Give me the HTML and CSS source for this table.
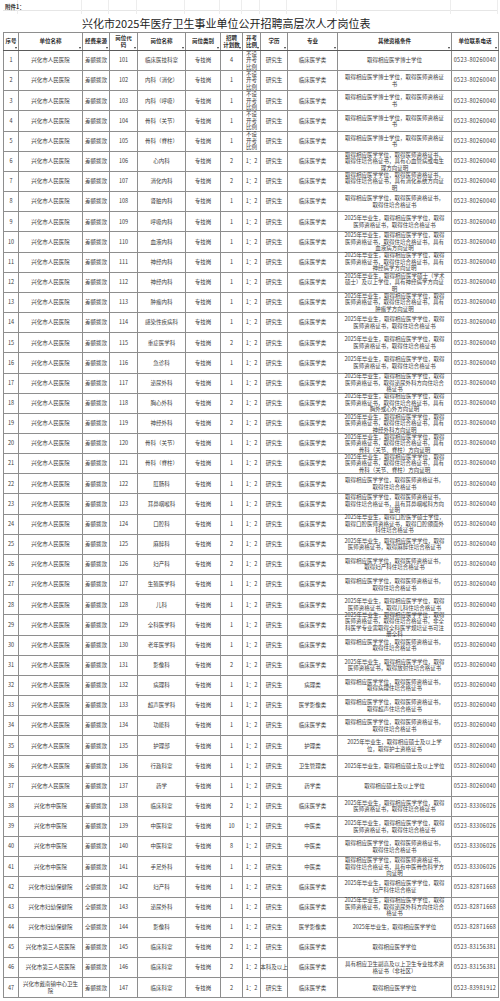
FILE: index.html
```html
<!DOCTYPE html>
<html lang="zh-CN">
<head>
<meta charset="utf-8">
<title>兴化市2025年医疗卫生事业单位公开招聘高层次人才岗位表</title>
<link rel="stylesheet" href="styles.css">
</head>
<body>
<div class="page">
  <div class="sheetrow">
    <span class="attach">附件1：</span><span></span><span></span><span></span><span></span><span></span><span></span><span></span><span></span><span></span><span></span><span></span>
  </div>
  <div class="title">兴化市2025年医疗卫生事业单位公开招聘高层次人才岗位表</div>
  <table class="grid">
    <colgroup>
      <col class="w1"><col class="w2"><col class="w3"><col class="w4"><col class="w5"><col class="w6"><col class="w7"><col class="w8"><col class="w9"><col class="w10"><col class="w11"><col class="w12">
    </colgroup>
    <thead>
      <tr>
        <th><div class="h">序号</div><i class="f"></i></th>
        <th><div class="h">单位名称</div><i class="f"></i></th>
        <th><div class="h">经费来源</div><i class="f"></i></th>
        <th><div class="h">岗位代<br>码</div><i class="f"></i></th>
        <th><div class="h">岗位名称</div><i class="f"></i></th>
        <th><div class="h">岗位类别</div><i class="f"></i></th>
        <th><div class="h">招聘<br>计划数</div><i class="f"></i></th>
        <th><div class="h">开考<br>比例</div><i class="f"></i></th>
        <th><div class="h">学历</div><i class="f"></i></th>
        <th><div class="h">专业</div><i class="f"></i></th>
        <th><div class="h">其他资格条件</div><i class="f"></i></th>
        <th><div class="h">单位联系电话</div><i class="f"></i></th>
      </tr>
    </thead>
    <tbody>
      <tr><td><div class="c">1</div></td><td class="unit"><div class="c">兴化市人民医院</div></td><td><div class="c">差额拨款</div></td><td><div class="c">101</div></td><td><div class="c">临床医技科室</div></td><td><div class="c">专技岗</div></td><td><div class="c">4</div></td><td><div class="c">不设开考比例</div></td><td><div class="c">研究生</div></td><td><div class="c">临床医学类</div></td><td class="cond"><div class="c">取得相应医学博士学位</div></td><td><div class="c tel">0523-80260040</div></td></tr>
      <tr><td><div class="c">2</div></td><td class="unit"><div class="c">兴化市人民医院</div></td><td><div class="c">差额拨款</div></td><td><div class="c">102</div></td><td><div class="c">内科（消化）</div></td><td><div class="c">专技岗</div></td><td><div class="c">1</div></td><td><div class="c">不设开考比例</div></td><td><div class="c">研究生</div></td><td><div class="c">临床医学类</div></td><td class="cond"><div class="c">取得相应医学博士学位，取得医师资格证书</div></td><td><div class="c tel">0523-80260040</div></td></tr>
      <tr><td><div class="c">3</div></td><td class="unit"><div class="c">兴化市人民医院</div></td><td><div class="c">差额拨款</div></td><td><div class="c">103</div></td><td><div class="c">内科（呼吸）</div></td><td><div class="c">专技岗</div></td><td><div class="c">1</div></td><td><div class="c">不设开考比例</div></td><td><div class="c">研究生</div></td><td><div class="c">临床医学类</div></td><td class="cond"><div class="c">取得相应医学博士学位，取得医师资格证书</div></td><td><div class="c tel">0523-80260040</div></td></tr>
      <tr><td><div class="c">4</div></td><td class="unit"><div class="c">兴化市人民医院</div></td><td><div class="c">差额拨款</div></td><td><div class="c">104</div></td><td><div class="c">骨科（关节）</div></td><td><div class="c">专技岗</div></td><td><div class="c">1</div></td><td><div class="c">不设开考比例</div></td><td><div class="c">研究生</div></td><td><div class="c">临床医学类</div></td><td class="cond"><div class="c">取得相应医学博士学位，取得医师资格证书</div></td><td><div class="c tel">0523-80260040</div></td></tr>
      <tr><td><div class="c">5</div></td><td class="unit"><div class="c">兴化市人民医院</div></td><td><div class="c">差额拨款</div></td><td><div class="c">105</div></td><td><div class="c">骨科（脊柱）</div></td><td><div class="c">专技岗</div></td><td><div class="c">1</div></td><td><div class="c">不设开考比例</div></td><td><div class="c">研究生</div></td><td><div class="c">临床医学类</div></td><td class="cond"><div class="c">取得相应医学博士学位，取得医师资格证书</div></td><td><div class="c tel">0523-80260040</div></td></tr>
      <tr><td><div class="c">6</div></td><td class="unit"><div class="c">兴化市人民医院</div></td><td><div class="c">差额拨款</div></td><td><div class="c">106</div></td><td><div class="c">心内科</div></td><td><div class="c">专技岗</div></td><td><div class="c">2</div></td><td><div class="c">1：2</div></td><td><div class="c">研究生</div></td><td><div class="c">临床医学类</div></td><td class="cond"><div class="c">取得相应医学学位，取得医师资格证书，取得住培合格证书，具有心血管病或电生理方向证明</div></td><td><div class="c tel">0523-80260040</div></td></tr>
      <tr><td><div class="c">7</div></td><td class="unit"><div class="c">兴化市人民医院</div></td><td><div class="c">差额拨款</div></td><td><div class="c">107</div></td><td><div class="c">消化内科</div></td><td><div class="c">专技岗</div></td><td><div class="c">2</div></td><td><div class="c">1：2</div></td><td><div class="c">研究生</div></td><td><div class="c">临床医学类</div></td><td class="cond"><div class="c">取得相应医学学位，取得医师资格证书，取得住培合格证书，具有消化系统方向证明</div></td><td><div class="c tel">0523-80260040</div></td></tr>
      <tr><td><div class="c">8</div></td><td class="unit"><div class="c">兴化市人民医院</div></td><td><div class="c">差额拨款</div></td><td><div class="c">108</div></td><td><div class="c">肾脏内科</div></td><td><div class="c">专技岗</div></td><td><div class="c">1</div></td><td><div class="c">1：2</div></td><td><div class="c">研究生</div></td><td><div class="c">临床医学类</div></td><td class="cond"><div class="c">取得相应医学学位，取得医师资格证书，取得住培合格证书</div></td><td><div class="c tel">0523-80260040</div></td></tr>
      <tr><td><div class="c">9</div></td><td class="unit"><div class="c">兴化市人民医院</div></td><td><div class="c">差额拨款</div></td><td><div class="c">109</div></td><td><div class="c">呼吸内科</div></td><td><div class="c">专技岗</div></td><td><div class="c">1</div></td><td><div class="c">1：2</div></td><td><div class="c">研究生</div></td><td><div class="c">临床医学类</div></td><td class="cond"><div class="c">2025年毕业生，取得相应医学学位，取得医师资格证书，取得住培合格证书</div></td><td><div class="c tel">0523-80260040</div></td></tr>
      <tr><td><div class="c">10</div></td><td class="unit"><div class="c">兴化市人民医院</div></td><td><div class="c">差额拨款</div></td><td><div class="c">110</div></td><td><div class="c">血液内科</div></td><td><div class="c">专技岗</div></td><td><div class="c">1</div></td><td><div class="c">1：2</div></td><td><div class="c">研究生</div></td><td><div class="c">临床医学类</div></td><td class="cond"><div class="c">2025年毕业生，取得相应医学学位，取得医师资格证书，取得住培合格证书，具有血液病方向证明</div></td><td><div class="c tel">0523-80260040</div></td></tr>
      <tr><td><div class="c">11</div></td><td class="unit"><div class="c">兴化市人民医院</div></td><td><div class="c">差额拨款</div></td><td><div class="c">111</div></td><td><div class="c">神经内科</div></td><td><div class="c">专技岗</div></td><td><div class="c">1</div></td><td><div class="c">1：2</div></td><td><div class="c">研究生</div></td><td><div class="c">临床医学类</div></td><td class="cond"><div class="c">2025年毕业生，取得相应医学学位，取得医师资格证书，取得住培合格证书，具有神经病学方向证明</div></td><td><div class="c tel">0523-80260040</div></td></tr>
      <tr><td><div class="c">12</div></td><td class="unit"><div class="c">兴化市人民医院</div></td><td><div class="c">差额拨款</div></td><td><div class="c">112</div></td><td><div class="c">神经内科</div></td><td><div class="c">专技岗</div></td><td><div class="c">1</div></td><td><div class="c">1：2</div></td><td><div class="c">研究生</div></td><td><div class="c">临床医学类</div></td><td class="cond"><div class="c">2025年毕业生，取得相应医学硕士（学术硕士）及以上学位，具有神经病学方向证明</div></td><td><div class="c tel">0523-80260040</div></td></tr>
      <tr><td><div class="c">13</div></td><td class="unit"><div class="c">兴化市人民医院</div></td><td><div class="c">差额拨款</div></td><td><div class="c">113</div></td><td><div class="c">肿瘤内科</div></td><td><div class="c">专技岗</div></td><td><div class="c">1</div></td><td><div class="c">1：2</div></td><td><div class="c">研究生</div></td><td><div class="c">临床医学类</div></td><td class="cond"><div class="c">2025年毕业生，取得相应医学学位，取得医师资格证书，取得住培合格证书，具有肿瘤学方向证明</div></td><td><div class="c tel">0523-80260040</div></td></tr>
      <tr><td><div class="c">14</div></td><td class="unit"><div class="c">兴化市人民医院</div></td><td><div class="c">差额拨款</div></td><td><div class="c">114</div></td><td><div class="c">感染性疾病科</div></td><td><div class="c">专技岗</div></td><td><div class="c">1</div></td><td><div class="c">1：2</div></td><td><div class="c">研究生</div></td><td><div class="c">临床医学类</div></td><td class="cond"><div class="c">2025年毕业生，取得相应医学学位，取得医师资格证书，取得住培合格证书</div></td><td><div class="c tel">0523-80260040</div></td></tr>
      <tr><td><div class="c">15</div></td><td class="unit"><div class="c">兴化市人民医院</div></td><td><div class="c">差额拨款</div></td><td><div class="c">115</div></td><td><div class="c">重症医学科</div></td><td><div class="c">专技岗</div></td><td><div class="c">2</div></td><td><div class="c">1：2</div></td><td><div class="c">研究生</div></td><td><div class="c">临床医学类</div></td><td class="cond"><div class="c">2025年毕业生，取得相应医学学位，取得医师资格证书，取得住培合格证书</div></td><td><div class="c tel">0523-80260040</div></td></tr>
      <tr><td><div class="c">16</div></td><td class="unit"><div class="c">兴化市人民医院</div></td><td><div class="c">差额拨款</div></td><td><div class="c">116</div></td><td><div class="c">急诊科</div></td><td><div class="c">专技岗</div></td><td><div class="c">1</div></td><td><div class="c">1：2</div></td><td><div class="c">研究生</div></td><td><div class="c">临床医学类</div></td><td class="cond"><div class="c">2025年毕业生，取得相应医学学位，取得医师资格证书，取得住培合格证书</div></td><td><div class="c tel">0523-80260040</div></td></tr>
      <tr><td><div class="c">17</div></td><td class="unit"><div class="c">兴化市人民医院</div></td><td><div class="c">差额拨款</div></td><td><div class="c">117</div></td><td><div class="c">泌尿外科</div></td><td><div class="c">专技岗</div></td><td><div class="c">1</div></td><td><div class="c">1：2</div></td><td><div class="c">研究生</div></td><td><div class="c">临床医学类</div></td><td class="cond"><div class="c">2025年毕业生，取得相应医学学位，取得医师资格证书，取得泌尿外科方向住培合格证书</div></td><td><div class="c tel">0523-80260040</div></td></tr>
      <tr><td><div class="c">18</div></td><td class="unit"><div class="c">兴化市人民医院</div></td><td><div class="c">差额拨款</div></td><td><div class="c">118</div></td><td><div class="c">胸心外科</div></td><td><div class="c">专技岗</div></td><td><div class="c">2</div></td><td><div class="c">1：2</div></td><td><div class="c">研究生</div></td><td><div class="c">临床医学类</div></td><td class="cond"><div class="c">2025年毕业生，取得相应医学学位，取得医师资格证书，取得住培合格证书，具有胸外或心外方向证明</div></td><td><div class="c tel">0523-80260040</div></td></tr>
      <tr><td><div class="c">19</div></td><td class="unit"><div class="c">兴化市人民医院</div></td><td><div class="c">差额拨款</div></td><td><div class="c">119</div></td><td><div class="c">神经外科</div></td><td><div class="c">专技岗</div></td><td><div class="c">2</div></td><td><div class="c">1：2</div></td><td><div class="c">研究生</div></td><td><div class="c">临床医学类</div></td><td class="cond"><div class="c">2025年毕业生，取得相应医学学位，取得医师资格证书，取得住培合格证书，具有神经外科方向证明</div></td><td><div class="c tel">0523-80260040</div></td></tr>
      <tr><td><div class="c">20</div></td><td class="unit"><div class="c">兴化市人民医院</div></td><td><div class="c">差额拨款</div></td><td><div class="c">120</div></td><td><div class="c">骨科（关节）</div></td><td><div class="c">专技岗</div></td><td><div class="c">1</div></td><td><div class="c">1：2</div></td><td><div class="c">研究生</div></td><td><div class="c">临床医学类</div></td><td class="cond"><div class="c">2025年毕业生，取得相应医学学位，取得医师资格证书，取得住培合格证书，具有骨科（关节、脊柱）方向证明</div></td><td><div class="c tel">0523-80260040</div></td></tr>
      <tr><td><div class="c">21</div></td><td class="unit"><div class="c">兴化市人民医院</div></td><td><div class="c">差额拨款</div></td><td><div class="c">121</div></td><td><div class="c">骨科（脊柱）</div></td><td><div class="c">专技岗</div></td><td><div class="c">1</div></td><td><div class="c">1：2</div></td><td><div class="c">研究生</div></td><td><div class="c">临床医学类</div></td><td class="cond"><div class="c">2025年毕业生，取得相应医学学位，取得医师资格证书，取得住培合格证书，具有骨科（关节、脊柱）方向证明</div></td><td><div class="c tel">0523-80260040</div></td></tr>
      <tr><td><div class="c">22</div></td><td class="unit"><div class="c">兴化市人民医院</div></td><td><div class="c">差额拨款</div></td><td><div class="c">122</div></td><td><div class="c">肛肠科</div></td><td><div class="c">专技岗</div></td><td><div class="c">1</div></td><td><div class="c">1：2</div></td><td><div class="c">研究生</div></td><td><div class="c">临床医学类</div></td><td class="cond"><div class="c">取得相应医学学位，取得医师资格证书，取得住培合格证书</div></td><td><div class="c tel">0523-80260040</div></td></tr>
      <tr><td><div class="c">23</div></td><td class="unit"><div class="c">兴化市人民医院</div></td><td><div class="c">差额拨款</div></td><td><div class="c">123</div></td><td><div class="c">耳鼻咽喉科</div></td><td><div class="c">专技岗</div></td><td><div class="c">1</div></td><td><div class="c">1：2</div></td><td><div class="c">研究生</div></td><td><div class="c">临床医学类</div></td><td class="cond"><div class="c">取得相应医学学位，取得医师资格证书，取得住培合格证书，具有耳鼻咽喉科方向证明</div></td><td><div class="c tel">0523-80260040</div></td></tr>
      <tr><td><div class="c">24</div></td><td class="unit"><div class="c">兴化市人民医院</div></td><td><div class="c">差额拨款</div></td><td><div class="c">124</div></td><td><div class="c">口腔科</div></td><td><div class="c">专技岗</div></td><td><div class="c">1</div></td><td><div class="c">1：2</div></td><td><div class="c">研究生</div></td><td><div class="c">临床医学类</div></td><td class="cond"><div class="c">2025年毕业生，取得口腔医学硕士学位，取得口腔医师资格证书，取得口腔颌面外科住培合格证书</div></td><td><div class="c tel">0523-80260040</div></td></tr>
      <tr><td><div class="c">25</div></td><td class="unit"><div class="c">兴化市人民医院</div></td><td><div class="c">差额拨款</div></td><td><div class="c">125</div></td><td><div class="c">麻醉科</div></td><td><div class="c">专技岗</div></td><td><div class="c">2</div></td><td><div class="c">1：2</div></td><td><div class="c">研究生</div></td><td><div class="c">临床医学类</div></td><td class="cond"><div class="c">2025年毕业生，取得相应医学学位，取得医师资格证书，取得麻醉住培合格证书</div></td><td><div class="c tel">0523-80260040</div></td></tr>
      <tr><td><div class="c">26</div></td><td class="unit"><div class="c">兴化市人民医院</div></td><td><div class="c">差额拨款</div></td><td><div class="c">126</div></td><td><div class="c">妇产科</div></td><td><div class="c">专技岗</div></td><td><div class="c">2</div></td><td><div class="c">1：2</div></td><td><div class="c">研究生</div></td><td><div class="c">临床医学类</div></td><td class="cond"><div class="c">取得相应医学学位，取得医师资格证书，取得妇产科住培合格证书</div></td><td><div class="c tel">0523-80260040</div></td></tr>
      <tr><td><div class="c">27</div></td><td class="unit"><div class="c">兴化市人民医院</div></td><td><div class="c">差额拨款</div></td><td><div class="c">127</div></td><td><div class="c">生殖医学科</div></td><td><div class="c">专技岗</div></td><td><div class="c">1</div></td><td><div class="c">1：2</div></td><td><div class="c">研究生</div></td><td><div class="c">临床医学类</div></td><td class="cond"><div class="c">取得相应医学学位，取得医师资格证书，取得住培合格证书</div></td><td><div class="c tel">0523-80260040</div></td></tr>
      <tr><td><div class="c">28</div></td><td class="unit"><div class="c">兴化市人民医院</div></td><td><div class="c">差额拨款</div></td><td><div class="c">128</div></td><td><div class="c">儿科</div></td><td><div class="c">专技岗</div></td><td><div class="c">1</div></td><td><div class="c">1：2</div></td><td><div class="c">研究生</div></td><td><div class="c">临床医学类</div></td><td class="cond"><div class="c">2025年毕业生，取得相应医学学位，取得医师资格证书，取得儿科住培合格证书</div></td><td><div class="c tel">0523-80260040</div></td></tr>
      <tr><td><div class="c">29</div></td><td class="unit"><div class="c">兴化市人民医院</div></td><td><div class="c">差额拨款</div></td><td><div class="c">129</div></td><td><div class="c">全科医学科</div></td><td><div class="c">专技岗</div></td><td><div class="c">1</div></td><td><div class="c">1：2</div></td><td><div class="c">研究生</div></td><td><div class="c">临床医学类</div></td><td class="cond"><div class="c">2025年毕业生，取得相应医学学位，取得医师资格证书，取得住培合格证书，非全科医学专业需取得全科医学规培证书可注册全科</div></td><td><div class="c tel">0523-80260040</div></td></tr>
      <tr><td><div class="c">30</div></td><td class="unit"><div class="c">兴化市人民医院</div></td><td><div class="c">差额拨款</div></td><td><div class="c">130</div></td><td><div class="c">老年医学科</div></td><td><div class="c">专技岗</div></td><td><div class="c">1</div></td><td><div class="c">1：2</div></td><td><div class="c">研究生</div></td><td><div class="c">临床医学类</div></td><td class="cond"><div class="c">取得相应医学学位，取得医师资格证书，取得住培合格证书</div></td><td><div class="c tel">0523-80260040</div></td></tr>
      <tr><td><div class="c">31</div></td><td class="unit"><div class="c">兴化市人民医院</div></td><td><div class="c">差额拨款</div></td><td><div class="c">131</div></td><td><div class="c">影像科</div></td><td><div class="c">专技岗</div></td><td><div class="c">2</div></td><td><div class="c">1：2</div></td><td><div class="c">研究生</div></td><td><div class="c">临床医学类</div></td><td class="cond"><div class="c">2025年毕业生，取得相应医学学位，取得医师资格证书，取得放射住培合格证书</div></td><td><div class="c tel">0523-80260040</div></td></tr>
      <tr><td><div class="c">32</div></td><td class="unit"><div class="c">兴化市人民医院</div></td><td><div class="c">差额拨款</div></td><td><div class="c">132</div></td><td><div class="c">病理科</div></td><td><div class="c">专技岗</div></td><td><div class="c">1</div></td><td><div class="c">1：2</div></td><td><div class="c">研究生</div></td><td><div class="c">病理类</div></td><td class="cond"><div class="c">取得相应医学学位，取得医师资格证书，取得病理住培合格证书</div></td><td><div class="c tel">0523-80260040</div></td></tr>
      <tr><td><div class="c">33</div></td><td class="unit"><div class="c">兴化市人民医院</div></td><td><div class="c">差额拨款</div></td><td><div class="c">133</div></td><td><div class="c">超声医学科</div></td><td><div class="c">专技岗</div></td><td><div class="c">1</div></td><td><div class="c">1：2</div></td><td><div class="c">研究生</div></td><td><div class="c">医学影像类</div></td><td class="cond"><div class="c">取得相应医学学位，取得医师资格证书，取得超声住培合格证书</div></td><td><div class="c tel">0523-80260040</div></td></tr>
      <tr><td><div class="c">34</div></td><td class="unit"><div class="c">兴化市人民医院</div></td><td><div class="c">差额拨款</div></td><td><div class="c">134</div></td><td><div class="c">功能科</div></td><td><div class="c">专技岗</div></td><td><div class="c">1</div></td><td><div class="c">1：2</div></td><td><div class="c">研究生</div></td><td><div class="c">临床医学类</div></td><td class="cond"><div class="c">取得相应医学学位，取得医师资格证书，取得住培合格证书</div></td><td><div class="c tel">0523-80260040</div></td></tr>
      <tr><td><div class="c">35</div></td><td class="unit"><div class="c">兴化市人民医院</div></td><td><div class="c">差额拨款</div></td><td><div class="c">135</div></td><td><div class="c">护理部</div></td><td><div class="c">专技岗</div></td><td><div class="c">1</div></td><td><div class="c">1：2</div></td><td><div class="c">研究生</div></td><td><div class="c">护理类</div></td><td class="cond"><div class="c">2025年毕业生，取得相应硕士及以上学位，取得护士资格证书</div></td><td><div class="c tel">0523-80260040</div></td></tr>
      <tr><td><div class="c">36</div></td><td class="unit"><div class="c">兴化市人民医院</div></td><td><div class="c">差额拨款</div></td><td><div class="c">136</div></td><td><div class="c">行政科室</div></td><td><div class="c">专技岗</div></td><td><div class="c">1</div></td><td><div class="c">1：2</div></td><td><div class="c">研究生</div></td><td><div class="c">卫生管理类</div></td><td class="cond"><div class="c">2025年毕业生，取得相应硕士及以上学位</div></td><td><div class="c tel">0523-80260040</div></td></tr>
      <tr><td><div class="c">37</div></td><td class="unit"><div class="c">兴化市人民医院</div></td><td><div class="c">差额拨款</div></td><td><div class="c">137</div></td><td><div class="c">药学</div></td><td><div class="c">专技岗</div></td><td><div class="c">1</div></td><td><div class="c">1：2</div></td><td><div class="c">研究生</div></td><td><div class="c">药学类</div></td><td class="cond"><div class="c">取得相应硕士及以上学位</div></td><td><div class="c tel">0523-80260040</div></td></tr>
      <tr><td><div class="c">38</div></td><td class="unit"><div class="c">兴化市中医院</div></td><td><div class="c">差额拨款</div></td><td><div class="c">138</div></td><td><div class="c">临床科室</div></td><td><div class="c">专技岗</div></td><td><div class="c">2</div></td><td><div class="c">1：2</div></td><td><div class="c">研究生</div></td><td><div class="c">临床医学类</div></td><td class="cond"><div class="c">2025年毕业生，取得相应医学学位，取得医师资格证书，取得住培合格证书</div></td><td><div class="c tel">0523-83306026</div></td></tr>
      <tr><td><div class="c">39</div></td><td class="unit"><div class="c">兴化市中医院</div></td><td><div class="c">差额拨款</div></td><td><div class="c">139</div></td><td><div class="c">中医科室</div></td><td><div class="c">专技岗</div></td><td><div class="c">10</div></td><td><div class="c">1：2</div></td><td><div class="c">研究生</div></td><td><div class="c">中医类</div></td><td class="cond"><div class="c">2025年毕业生，取得相应医学学位，取得医师资格证书，取得住培合格证书</div></td><td><div class="c tel">0523-83306026</div></td></tr>
      <tr><td><div class="c">40</div></td><td class="unit"><div class="c">兴化市中医院</div></td><td><div class="c">差额拨款</div></td><td><div class="c">140</div></td><td><div class="c">中医科室</div></td><td><div class="c">专技岗</div></td><td><div class="c">8</div></td><td><div class="c">1：2</div></td><td><div class="c">研究生</div></td><td><div class="c">中医类</div></td><td class="cond"><div class="c">取得相应医学学位，取得医师资格证书，取得住培合格证书</div></td><td><div class="c tel">0523-83306026</div></td></tr>
      <tr><td><div class="c">41</div></td><td class="unit"><div class="c">兴化市中医院</div></td><td><div class="c">差额拨款</div></td><td><div class="c">141</div></td><td><div class="c">手足外科</div></td><td><div class="c">专技岗</div></td><td><div class="c">1</div></td><td><div class="c">1：2</div></td><td><div class="c">研究生</div></td><td><div class="c">中医类</div></td><td class="cond"><div class="c">取得相应医学学位，取得医师资格证书，取得住培合格证书，具有中医骨伤科学方向证明</div></td><td><div class="c tel">0523-83306026</div></td></tr>
      <tr><td><div class="c">42</div></td><td class="unit"><div class="c">兴化市妇幼保健院</div></td><td><div class="c">全额拨款</div></td><td><div class="c">142</div></td><td><div class="c">妇产科</div></td><td><div class="c">专技岗</div></td><td><div class="c">1</div></td><td><div class="c">1：2</div></td><td><div class="c">研究生</div></td><td><div class="c">临床医学类</div></td><td class="cond"><div class="c">2025年毕业生，取得相应医学学位，取得妇产科住培合格证</div></td><td><div class="c tel">0523-82871668</div></td></tr>
      <tr><td><div class="c">43</div></td><td class="unit"><div class="c">兴化市妇幼保健院</div></td><td><div class="c">全额拨款</div></td><td><div class="c">143</div></td><td><div class="c">泌尿外科</div></td><td><div class="c">专技岗</div></td><td><div class="c">1</div></td><td><div class="c">1：2</div></td><td><div class="c">研究生</div></td><td><div class="c">临床医学类</div></td><td class="cond"><div class="c">2025年毕业生，取得相应医学学位，取得医师资格证书，取得泌尿外科方向住培合格证书</div></td><td><div class="c tel">0523-82871668</div></td></tr>
      <tr><td><div class="c">44</div></td><td class="unit"><div class="c">兴化市妇幼保健院</div></td><td><div class="c">全额拨款</div></td><td><div class="c">144</div></td><td><div class="c">影像科</div></td><td><div class="c">专技岗</div></td><td><div class="c">1</div></td><td><div class="c">1：2</div></td><td><div class="c">研究生</div></td><td><div class="c">医学影像类</div></td><td class="cond"><div class="c">2025年毕业生，取得相应医学学位</div></td><td><div class="c tel">0523-82871668</div></td></tr>
      <tr><td><div class="c">45</div></td><td class="unit"><div class="c">兴化市第三人民医院</div></td><td><div class="c">差额拨款</div></td><td><div class="c">145</div></td><td><div class="c">临床科室</div></td><td><div class="c">专技岗</div></td><td><div class="c">2</div></td><td><div class="c">1：2</div></td><td><div class="c">研究生</div></td><td><div class="c">临床医学类</div></td><td class="cond"><div class="c">取得相应医学学位</div></td><td><div class="c tel">0523-83156381</div></td></tr>
      <tr><td><div class="c">46</div></td><td class="unit"><div class="c">兴化市第三人民医院</div></td><td><div class="c">差额拨款</div></td><td><div class="c">146</div></td><td><div class="c">临床科室</div></td><td><div class="c">专技岗</div></td><td><div class="c">2</div></td><td><div class="c">1：2</div></td><td><div class="c nowrap">本科及以上</div></td><td><div class="c">临床医学类</div></td><td class="cond"><div class="c">具有相应卫生副高及以上卫生专业技术资格证书（非社区）</div></td><td><div class="c tel">0523-83156381</div></td></tr>
      <tr><td><div class="c">47</div></td><td class="unit"><div class="c">兴化市戴南镇中心卫生院</div></td><td><div class="c">差额拨款</div></td><td><div class="c">147</div></td><td><div class="c">临床科室</div></td><td><div class="c">专技岗</div></td><td><div class="c">2</div></td><td><div class="c">1：2</div></td><td><div class="c">研究生</div></td><td><div class="c">临床医学类</div></td><td class="cond"><div class="c">取得相应医学学位</div></td><td><div class="c tel">0523-83981912</div></td></tr>
    </tbody>
  </table>
</div>
</body>
</html>
```

FILE: styles.css
```css
html, body {
  margin: 0;
  padding: 0;
  background: #ffffff;
}

body {
  font-family: "Noto Sans CJK SC", "Noto Sans", sans-serif;
  color: #3a3a3a;
}

.page {
  width: 495px;
  padding: 0 2px 0 3px;
}

.sheetrow {
  display: grid;
  grid-template-columns: 15px 64px 27px 28px 48px 35px 22px 18px 27px 50px 114px 47px;
  height: 10px;
  border-bottom: 1px solid #e6e6e6;
}

.sheetrow span {
  border-right: 1px solid #ededed;
  font-size: 5.5px;
  line-height: 14px;
  white-space: nowrap;
}

.sheetrow .attach {
  padding-left: 2px;
  color: #333;
  font-weight: bold;
}

.title {
  height: 18px;
  padding: 3px 0 0 79px;
  font-size: 11px;
  line-height: 18px;
  color: #222;
  white-space: nowrap;
}

.grid {
  width: 495px;
  table-layout: fixed;
  border-collapse: collapse;
}

.w1 { width: 15px; }
.w2 { width: 64px; }
.w3 { width: 27px; }
.w4 { width: 28px; }
.w5 { width: 48px; }
.w6 { width: 35px; }
.w7 { width: 22px; }
.w8 { width: 18px; }
.w9 { width: 27px; }
.w10 { width: 50px; }
.w11 { width: 114px; }
.w12 { width: 47px; }

.grid th,
.grid td {
  border: 1px solid #8e8e8e;
  padding: 0 1px;
  text-align: center;
  vertical-align: middle;
  font-size: 5.5px;
  line-height: 6.5px;
}

.grid td.unit {
  padding: 0 2px;
}

.grid td.cond {
  padding: 0 5px;
}

.grid th {
  position: relative;
  font-weight: bold;
  color: #2a2a2a;
  border-bottom-color: #5a5a5a;
}

.h,
.c {
  display: flex;
  flex-direction: column;
  justify-content: center;
  align-items: stretch;
  overflow: visible;
  word-break: break-all;
}

.h {
  height: 17px;
}

.c {
  height: 19.17px;
}

.tel,
.nowrap {
  white-space: nowrap;
  align-items: center;
}

.tel {
  letter-spacing: 0.3px;
}

.f {
  position: absolute;
  right: 1px;
  bottom: 1px;
  width: 0;
  height: 0;
  border-left: 1.5px solid transparent;
  border-right: 1.5px solid transparent;
  border-top: 2px solid #333;
}
```
